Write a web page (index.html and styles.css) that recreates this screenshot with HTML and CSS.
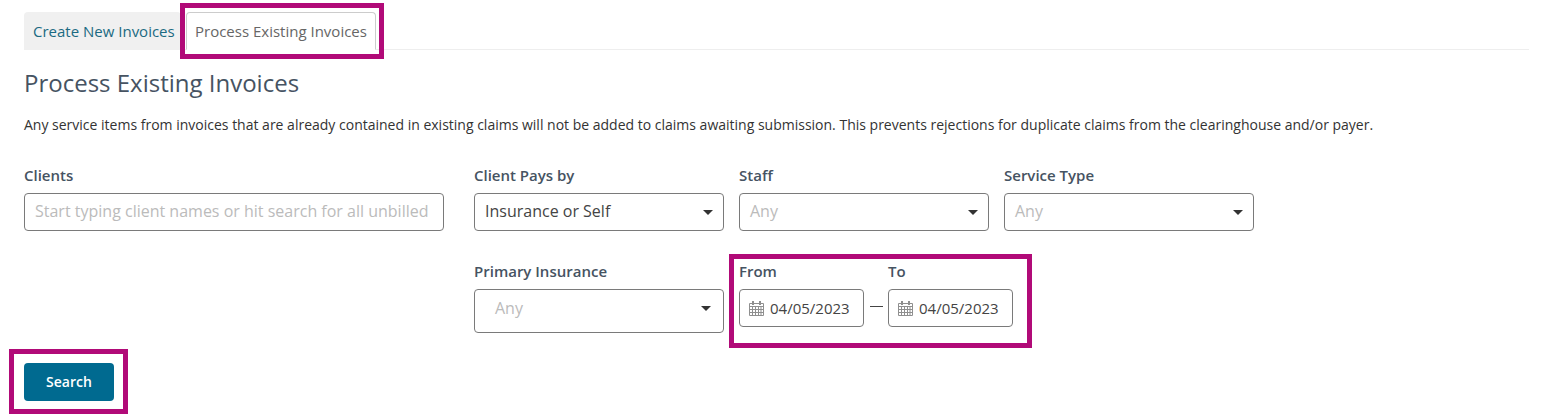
FILE: index.html
```html
<!DOCTYPE html>
<html lang="en">
<head>
<meta charset="utf-8">
<title>Process Existing Invoices</title>
<link rel="stylesheet" href="styles.css">
</head>
<body>
<main class="page">
  <nav class="tabs">
    <a class="tab tab-inactive">Create New Invoices</a>
    <a class="tab tab-active">Process Existing Invoices</a>
  </nav>
  <h1 class="title">Process Existing Invoices</h1>
  <p class="desc">Any service items from invoices that are already contained in existing claims will not be added to claims awaiting submission. This prevents rejections for duplicate claims from the clearinghouse and/or payer.</p>
  <div class="filters">
    <div class="field">
      <label class="label">Clients</label>
      <div class="control clients"><span class="placeholder">Start typing client names or hit search for all unbilled</span></div>
    </div>
    <div class="field">
      <label class="label">Client Pays by</label>
      <div class="control select"><span class="value">Insurance or Self</span><i class="caret"></i></div>
    </div>
    <div class="field">
      <label class="label">Staff</label>
      <div class="control select"><span class="placeholder">Any</span><i class="caret"></i></div>
    </div>
    <div class="field">
      <label class="label">Service Type</label>
      <div class="control select"><span class="placeholder">Any</span><i class="caret"></i></div>
    </div>
    <div class="field field-insurance">
      <label class="label">Primary Insurance</label>
      <div class="control select tall"><span class="placeholder">Any</span><i class="caret"></i></div>
    </div>
    <div class="field field-dates">
      <div class="date-col">
        <label class="label">From</label>
        <div class="control date">
          <svg class="cal" viewBox="0 0 15 15"><path d="M.5 2.5h14v12H.5zM.5 5.5h14M.5 8.5h14M.5 11.5h14M3.5 5.5v9M6.5 5.5v9M9.5 5.5v9M12 5.5v9" fill="none" stroke="#8f8f8f" stroke-width="1"/><path d="M3 0h2v4H3zM10 0h2v4h-2z" fill="#8f8f8f"/></svg>
          <span class="value">04/05/2023</span>
        </div>
      </div>
      <span class="dash"></span>
      <div class="date-col">
        <label class="label">To</label>
        <div class="control date">
          <svg class="cal" viewBox="0 0 15 15"><path d="M.5 2.5h14v12H.5zM.5 5.5h14M.5 8.5h14M.5 11.5h14M3.5 5.5v9M6.5 5.5v9M9.5 5.5v9M12 5.5v9" fill="none" stroke="#8f8f8f" stroke-width="1"/><path d="M3 0h2v4H3zM10 0h2v4h-2z" fill="#8f8f8f"/></svg>
          <span class="value">04/05/2023</span>
        </div>
      </div>
    </div>
  </div>
  <button class="search" type="button">Search</button>
</main>
<div class="mark mark-tab"></div>
<div class="mark mark-dates"></div>
<div class="mark mark-search"></div>
</body>
</html>
```
FILE: styles.css
```css
* { box-sizing: border-box; }
html, body { margin: 0; padding: 0; background: #fff; }
body {
  width: 1559px;
  height: 420px;
  overflow: hidden;
  position: relative;
  font-family: "Open Sans", "Noto Sans", sans-serif;
  font-size: 14px;
  color: #333;
}
.page { padding: 12px 30px 0 24px; }
.tabs {
  display: flex;
  height: 38px;
  border-bottom: 1px solid #eee;
  gap: 5px;
}
.tab {
  display: flex;
  align-items: center;
  height: 38px;
  font-size: 15px;
  white-space: nowrap;
  border-radius: 4px 4px 0 0;
}
.tab-inactive {
  background: #f0f0f0;
  color: #1b6a82;
  width: 157px;
  padding-left: 9px;
}
.tab-active {
  width: 190px;
  padding-left: 8px;
  background: #fff;
  color: #666;
  border: 1px solid #ccc;
  border-bottom-color: #fff;
}
.title {
  margin: 16px 0 0;
  font-size: 24px;
  line-height: 33px;
  font-weight: 400;
  color: #465362;
}
.desc {
  margin: 17px 0 0;
  font-size: 14px;
  line-height: 18px;
  color: #333;
  white-space: nowrap;
}
.filters {
  display: grid;
  grid-template-columns: 450px 265px 265px 250px;
  row-gap: 31px;
  margin-top: 32px;
}
.field-insurance { grid-column: 2; }
.label {
  display: block;
  font-size: 15px;
  font-weight: 600;
  line-height: 19px;
  color: #465362;
  margin-bottom: 8px;
}
.control {
  display: flex;
  align-items: center;
  height: 38px;
  border: 1px solid #7a7a7a;
  border-radius: 4px;
  background: #fff;
  padding: 0 10px 2px;
  font-size: 16px;
}
.clients { width: 420px; }
.select { width: 250px; position: relative; }
.tall { height: 44px; padding-bottom: 6px; }
.tall .placeholder { margin-left: 10px; }
.placeholder { color: #bbb; }
.value { color: #444; }
.caret {
  position: absolute;
  right: 10px;
  top: 16px;
  border-left: 5px solid transparent;
  border-right: 5px solid transparent;
  border-top: 5px solid #333;
}
.tall .caret { right: 12px; }
.field-dates { display: flex; align-items: flex-start; }
.date-col { width: 125px; }
.date { width: 125px; padding: 0 0 0 9px; gap: 6px; font-size: 15px; }
.cal { width: 15px; height: 15px; flex: none; }
.dash {
  width: 13px;
  margin: 44px 5px 0 6px;
  border-top: 1px solid #444;
  flex: none;
}
.search {
  display: block;
  margin-top: 30px;
  padding: 0 0 2px;
  width: 90px;
  height: 38px;
  border: 0;
  border-radius: 4px;
  background: #006a90;
  color: #fff;
  font-family: inherit;
  font-size: 14px;
  font-weight: 600;
}
.mark {
  position: absolute;
  border: 5px solid #b10a78;
  pointer-events: none;
}
.mark-tab { left: 180px; top: 3px; width: 204px; height: 56px; }
.mark-dates { left: 729px; top: 254px; width: 303px; height: 94px; }
.mark-search { left: 9px; top: 349px; width: 119px; height: 65px; }
```
